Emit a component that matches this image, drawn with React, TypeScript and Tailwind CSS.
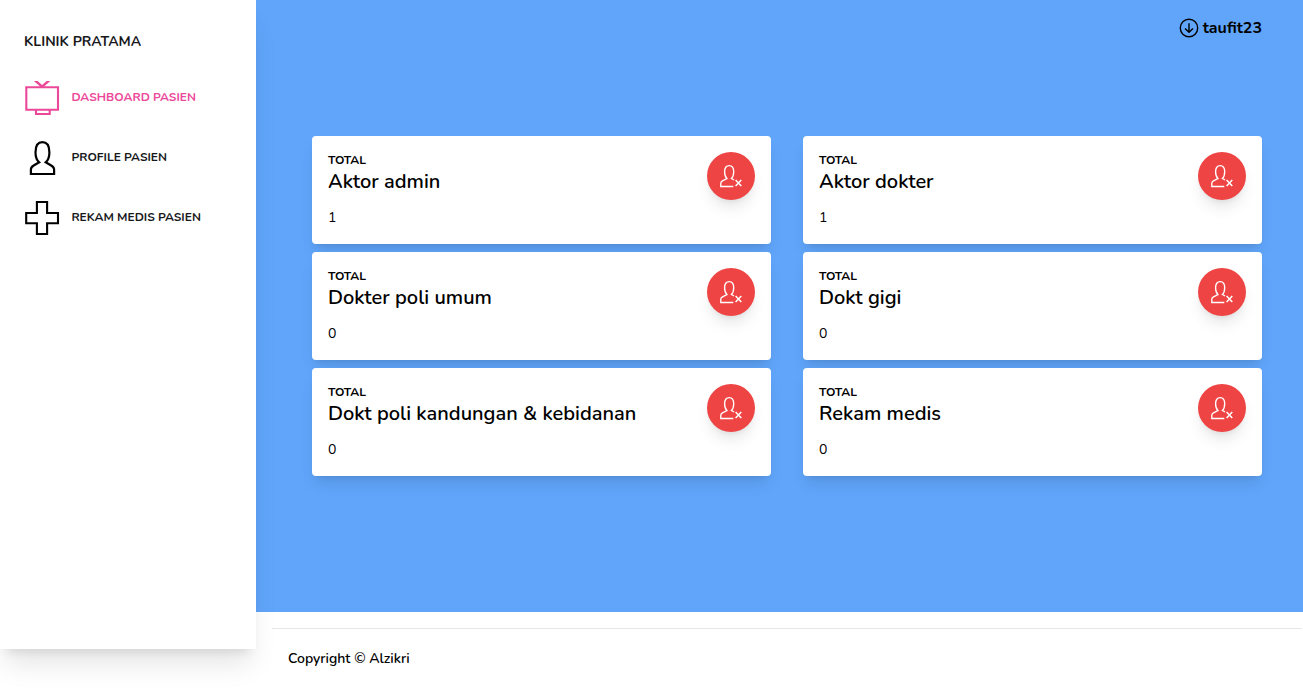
import React from "react";

function TvIcon() {
  return (
    <svg width="36" height="36" viewBox="0 0 36 36" fill="none" stroke="currentColor" strokeWidth="2.1" className="shrink-0">
      <path d="M2.300 7.300h31.700v22.400h-31.700zM12 29.700v4.300h13.700v-4.300" />
      <path d="M9.800 1h3.800l4.500 3.900L22.600 1h3.800l-7.200 6.300h-2.200z" fill="currentColor" stroke="none" />
    </svg>
  );
}

function UserIcon() {
  return (
    <svg width="36" height="36" viewBox="0 0 36 36" fill="none" stroke="currentColor" strokeWidth="2.2" className="shrink-0">
      <path d="M6.900 34v-4.500c0-1.800 1-2.900 2.800-4l5.500-3.200c-2.500-2.200-3.700-5.400-3.700-9.900C11.500 6 14 2.200 18.400 2.200s7 3.800 7 10.200c0 4.500-1.200 7.700-3.700 9.900l5.500 3.200c1.800 1.100 2.900 2.200 2.900 4v4.500z" />
    </svg>
  );
}

function CrossIcon() {
  return (
    <svg width="36" height="36" viewBox="0 0 36 36" fill="none" stroke="currentColor" strokeWidth="2.1" className="shrink-0">
      <path d="M12.900 2h10.200v11h10.900v10.200h-10.900v10.800h-10.200v-10.800h-10.700v-10.200h10.700z" />
    </svg>
  );
}

function UserRemoveIcon() {
  return (
    <svg width="24" height="24" viewBox="0 0 24 24" fill="none" stroke="currentColor" strokeWidth="1.35">
      <path d="M14.300 22.500H1.800v-3.300c0-1 .6-1.700 1.700-2.300L7.900 14.500C6.600 13.300 5.600 11 5.600 7.800c0-3.900 1.600-6.200 4.600-6.200s4.500 2.300 4.500 6.200c0 3.200-.9 5.500-2.300 6.700l2.700 1.500" />
      <path d="M16.600 16l5.700 6M22.300 16l-5.700 6" strokeWidth="1.500" />
    </svg>
  );
}

function CircleDownIcon() {
  return (
    <svg width="20" height="20" viewBox="0 0 20 20" fill="none" stroke="currentColor" strokeWidth="1.400">
      <circle cx="10" cy="10" r="8.700" />
      <path d="M10 5.300v8.800M6 10.500l4 3.800 4-3.800" />
    </svg>
  );
}

const menu = [
  { label: "DASHBOARD PASIEN", Icon: TvIcon, tone: "text-[#ec4899]", ink: "text-[#ec4899]" },
  { label: "PROFILE PASIEN", Icon: UserIcon, tone: "text-black", ink: "text-[#18181b]" },
  { label: "REKAM MEDIS PASIEN", Icon: CrossIcon, tone: "text-black", ink: "text-[#18181b]" },
];

const cards = [
  { title: "Aktor admin", value: 1 },
  { title: "Aktor dokter", value: 1 },
  { title: "Dokter poli umum", value: 0 },
  { title: "Dokt gigi", value: 0 },
  { title: "Dokt poli kandungan & kebidanan", value: 0 },
  { title: "Rekam medis", value: 0 },
];

function StatCard({ title, value }: { title: string; value: number }) {
  return (
    <div className="flex h-[108px] justify-between rounded bg-white p-4 shadow-lg">
      <div className="whitespace-nowrap">
        <h5 className="text-xs font-bold leading-4">TOTAL</h5>
        <div className="text-xl font-semibold leading-7">{title}</div>
        <p className="mt-3 text-sm leading-5">{value}</p>
      </div>
      <div className="flex size-12 shrink-0 items-center justify-center rounded-full bg-[#ef4444] text-white shadow-lg">
        <UserRemoveIcon />
      </div>
    </div>
  );
}

export default function App() {
  return (
    <div className="flex h-[689px] w-full items-start overflow-hidden bg-white font-[Nunito,'Noto_Sans',sans-serif] text-black">
      <nav className="relative z-10 h-[649px] w-64 shrink-0 bg-white px-6 pt-8 shadow-xl">
        <div className="whitespace-nowrap text-sm font-bold leading-5 text-[#18181b]">KLINIK PRATAMA</div>
        <ul className="mt-7 flex flex-col gap-6">
          {menu.map(({ label, Icon, tone, ink }) => (
            <li key={label} className={`flex h-9 items-center gap-[11.4px] ${tone}`}>
              <Icon />
              <span className={`whitespace-nowrap pb-0.5 text-xs font-bold ${ink}`}>{label}</span>
            </li>
          ))}
        </ul>
      </nav>
      <div className="flex-1">
        <main className="h-[612px] bg-[#60a5fa] pl-14 pr-[41px]">
          <header className="flex h-[136px] items-start justify-end gap-1 pt-[18px]">
            <CircleDownIcon />
            <span className="text-base font-bold leading-5">taufit23</span>
          </header>
          <div className="grid grid-cols-2 gap-x-8 gap-y-2">
            {cards.map((card) => (
              <StatCard key={card.title} {...card} />
            ))}
          </div>
        </main>
        <footer className="ml-4 mr-px mt-4 border-t border-gray-200 pl-4 pt-5 text-sm font-semibold leading-5">
          Copyright © Alzikri
        </footer>
      </div>
    </div>
  );
}
